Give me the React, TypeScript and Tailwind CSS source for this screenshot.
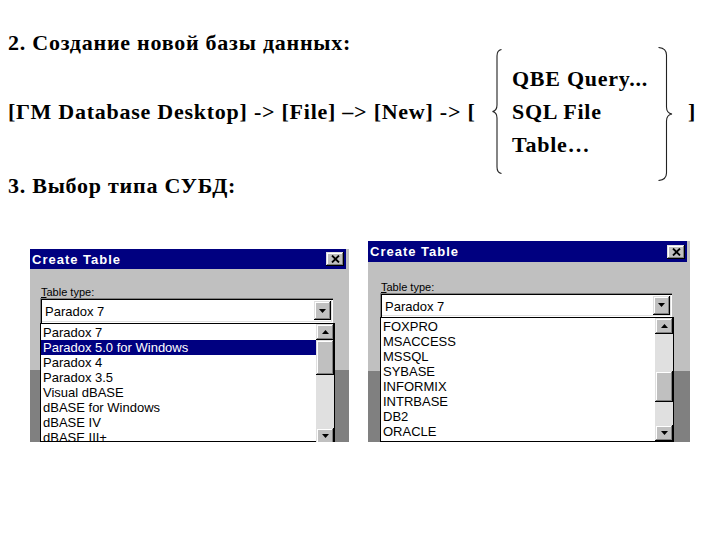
import type { ReactNode } from 'react';

const RAISED =
  'bg-[#c0c0c0] shadow-[inset_-1px_-1px_0_#000,inset_1px_1px_0_#dfdfdf,inset_-2px_-2px_0_#808080,inset_2px_2px_0_#fff]';

function Tri({ up }: { up?: boolean }) {
  return (
    <svg width="7" height="4" viewBox="0 0 7 4">
      <path d={up ? 'M3.5 0L7 4H0z' : 'M0 0h7L3.5 4z'} fill="#000" />
    </svg>
  );
}

function Btn({ className, children }: { className: string; children?: ReactNode }) {
  return <div className={`flex shrink-0 items-center justify-center ${RAISED} ${className}`}>{children}</div>;
}

type Seg = { kind: 'up' | 'down' | 'thumb' | 'track'; cls: string };

function CreateTable(props: {
  root: string;
  title: string;
  label: string;
  combo: string;
  list: string;
  items: string[];
  selected?: number;
  scroll: Seg[];
}) {
  return (
    <div className={`flex shrink-0 flex-col overflow-hidden font-['Liberation_Sans',Arial,sans-serif] ${props.root}`}>
      <div className={`flex items-center justify-between bg-[#000080] pl-[2px] pr-[2px] ${props.title}`}>
        <span className="text-[13px] font-bold leading-none tracking-[1px] text-white">Create Table</span>
        <Btn className="h-[14px] w-[18px]">
          <svg width="9" height="8" viewBox="0 0 9 8">
            <path d="M1 0.5l7 7M8 0.5l-7 7" stroke="#000" strokeWidth="1.8" />
          </svg>
        </Btn>
      </div>
      <div className={`text-[11px] leading-[12px] text-black ${props.label}`}>
        <span className="underline">T</span>able type:
      </div>
      <div
        className={`flex items-center justify-between bg-white pl-[5px] pr-[2px] shadow-[inset_1px_1px_0_#808080,inset_2px_2px_0_#000,inset_-1px_-1px_0_#fff,inset_-2px_-2px_0_#dfdfdf] ${props.combo}`}
      >
        <span className="pt-[2px] text-[13px] leading-[15px] text-black">Paradox 7</span>
        <Btn className="h-[19px] w-[17px]">
          <Tri />
        </Btn>
      </div>
      <div className={`flex min-h-0 flex-1 border border-black bg-white ${props.list}`}>
        <div className="flex-1 pt-[1px]">
          {props.items.map((it, i) => (
            <div
              key={it}
              className={`h-[15px] pl-[2px] text-[13px] leading-[15px] whitespace-nowrap ${
                i === props.selected ? 'bg-[#000080] text-white' : 'text-black'
              }`}
            >
              {it}
            </div>
          ))}
        </div>
        <div className="flex w-[18px] flex-col">
          {props.scroll.map((s, i) => {
            if (s.kind === 'up' || s.kind === 'down')
              return (
                <Btn key={i} className={s.cls}>
                  <Tri up={s.kind === 'up'} />
                </Btn>
              );
            if (s.kind === 'thumb') return <Btn key={i} className={s.cls} />;
            return <div key={i} className={`shrink-0 bg-[#e0e0e0] ${s.cls}`} />;
          })}
        </div>
      </div>
    </div>
  );
}

function BraceLeft() {
  return (
    <svg width="10" height="125" viewBox="0 0 10 125" className="ml-[8px] shrink-0">
      <path
        d="M9.5 0.5C6.5 1 5 3 5 7V56C5 59.5 3 62 0.5 62.5C3 63 5 65.5 5 69V118C5 122 6.5 124 9.5 124.5"
        fill="none"
        stroke="#222"
        strokeWidth="1.1"
      />
    </svg>
  );
}

function BraceRight() {
  return (
    <svg width="15" height="134" viewBox="0 0 15 134" className="mt-[5px] shrink-0">
      <path
        d="M0.5 0.5C5.5 1 8.5 3 8.5 8V60C8.5 64 11 66.5 14 67C11 67.5 8.5 70 8.5 74V126C8.5 131 5.5 133 0.5 133.5"
        fill="none"
        stroke="#222"
        strokeWidth="1.1"
      />
    </svg>
  );
}

export default function App() {
  return (
    <div className="h-[540px] w-[720px] overflow-hidden bg-white">
      <div className="px-[8px] pt-[30px] font-['Liberation_Serif','Times_New_Roman',serif] text-[22px] font-bold tracking-[0.75px] text-black">
        <div className="leading-[25px] whitespace-nowrap">2. Создание новой базы данных:</div>
        <div className="mt-[7px] flex h-[99px] items-center leading-[33px]">
          <span className="w-[476px] shrink-0 whitespace-pre">[ГМ Database Desktop] -&gt; [File] –&gt; [New] -&gt; [</span>
          <BraceLeft />
          <div className="ml-[10px] w-[146px] shrink-0 whitespace-nowrap">
            <div>QBE Query...</div>
            <div>SQL File</div>
            <div>Table…</div>
          </div>
          <BraceRight />
          <span className="ml-[15px]">]</span>
        </div>
        <div className="mt-[12px] leading-[25px] whitespace-nowrap">3. Выбор типа СУБД:</div>
      </div>

      <div className="mt-[43px] flex items-start">
        <CreateTable
          root="mt-[8px] ml-[30px] h-[193px] w-[319px] bg-[linear-gradient(to_bottom,#c0c0c0_121px,#808080_121px)]"
          title="h-[20px] w-[316px]"
          label="mt-[17px] ml-[11px]"
          combo="ml-[10px] h-[25px] w-[293px]"
          list="ml-[10px] w-[295px]"
          items={[
            'Paradox 7',
            'Paradox 5.0 for Windows',
            'Paradox 4',
            'Paradox 3.5',
            'Visual dBASE',
            'dBASE for Windows',
            'dBASE IV',
            'dBASE III+',
          ]}
          selected={1}
          scroll={[
            { kind: 'up', cls: 'h-[16px]' },
            { kind: 'thumb', cls: 'h-[35px]' },
            { kind: 'track', cls: 'h-[53px]' },
            { kind: 'down', cls: 'h-[16px]' },
          ]}
        />
        <CreateTable
          root="ml-[19px] h-[201px] w-[322px] bg-[linear-gradient(to_bottom,#c0c0c0_130px,#808080_130px)]"
          title="h-[21px] w-[319px]"
          label="mt-[19px] ml-[13px]"
          combo="ml-[12px] h-[24px] w-[292px]"
          list="ml-[12px] w-[294px]"
          items={['FOXPRO', 'MSACCESS', 'MSSQL', 'SYBASE', 'INFORMIX', 'INTRBASE', 'DB2', 'ORACLE']}
          scroll={[
            { kind: 'up', cls: 'h-[16px]' },
            { kind: 'track', cls: 'h-[37px]' },
            { kind: 'thumb', cls: 'h-[31px]' },
            { kind: 'track', cls: 'h-[23px]' },
            { kind: 'down', cls: 'h-[16px]' },
          ]}
        />
      </div>
    </div>
  );
}
